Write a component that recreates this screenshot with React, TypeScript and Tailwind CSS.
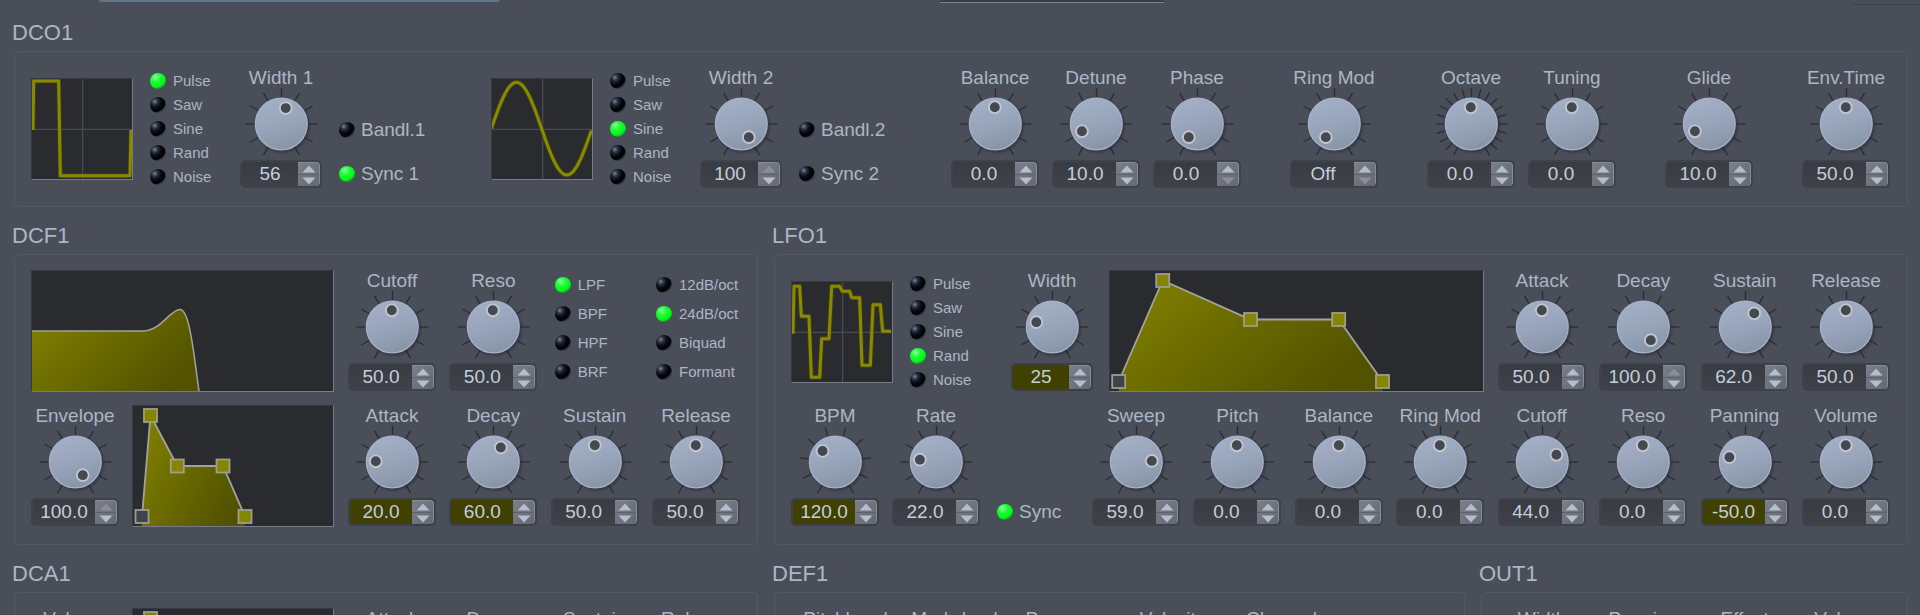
import React, { useId, useState } from "react";

const LED =
  "m-0 size-4 shrink-0 cursor-pointer appearance-none rounded-full bg-[radial-gradient(circle_at_30%_28%,#7d8593_0%,#2b3443_18%,#080d17_38%,#000000_58%,#0a0b0e_64%,#3c3f48_72%)] checked:bg-[radial-gradient(circle_at_36%_28%,#8effa0_0%,#1cff36_30%,#00fa14_60%,#00e012_66%,#2f7a40_76%)]";

function Led({
  type,
  name,
  text,
  checked,
  small,
}: {
  type: "radio" | "checkbox";
  name?: string;
  text: string;
  checked?: boolean;
  small?: boolean;
}) {
  const id = useId();
  return (
    <div className={small ? "flex items-center gap-[7px]" : "flex items-center gap-1.5"}>
      <input id={id} type={type} name={name} defaultChecked={checked} className={LED} />
      <label
        htmlFor={id}
        className={small ? "text-[15px] leading-6 whitespace-nowrap" : "text-[19px] leading-7 whitespace-nowrap"}
      >
        {text}
      </label>
    </div>
  );
}

function LedList({ name, items, selected, roomy }: { name: string; items: string[]; selected: number; roomy?: boolean }) {
  return (
    <div role="radiogroup" aria-label={name} className={roomy ? "w-[88px] pl-1" : "w-[74px] shrink-0 pt-0.5"}>
      {items.map((t, i) => (
        <div key={t} className={roomy ? "flex h-[29px] items-center" : "flex h-6 items-center"}>
          <Led small type="radio" name={name} text={t} checked={i === selected} />
        </div>
      ))}
    </div>
  );
}

type KnobProps = {
  label: string;
  value: number;
  min?: number;
  max?: number;
  digits?: number;
  ticks?: number;
  active?: boolean;
  narrow?: boolean;
  offAtMin?: boolean;
};

function Knob({ label, value, min = 0, max = 100, digits = 1, ticks = 11, active, narrow, offAtMin }: KnobProps) {
  const id = useId();
  const [v, setV] = useState(value);
  const clamp = (n: number) => Math.min(max, Math.max(min, n));
  const a = ((-150 + (300 * (v - min)) / (max - min)) * Math.PI) / 180;
  const shown = offAtMin && v === min ? "Off" : v.toFixed(digits);
  return (
    <div className={narrow ? "w-[82px] shrink-0 pt-px" : "w-[88px] shrink-0 pt-px"}>
      <Caption htmlFor={id}>{label}</Caption>
      <div className="relative flex h-[72px] justify-center">
        <svg width="82" height="72" viewBox="0 0 82 72" aria-hidden="true">
          <defs>
            <linearGradient id={id + "f"} x1="0.35" y1="0" x2="0.65" y2="1">
              <stop offset="0" stopColor="#a2afc5" />
              <stop offset="0.5" stopColor="#98a4b9" />
              <stop offset="1" stopColor="#8793a5" />
            </linearGradient>
            <radialGradient id={id + "s"}>
              <stop offset="0.82" stopColor="#23252b" stopOpacity="0.65" />
              <stop offset="1" stopColor="#23252b" stopOpacity="0" />
            </radialGradient>
          </defs>
          {Array.from({ length: ticks }, (_, i) => {
            const t = ((-150 + (300 * i) / (ticks - 1)) * Math.PI) / 180;
            return (
              <line
                key={i}
                x1={41.5 + 27 * Math.sin(t)}
                y1={36 - 27 * Math.cos(t)}
                x2={41.5 + 36 * Math.sin(t)}
                y2={36 - 36 * Math.cos(t)}
                stroke="#2b2d33"
                strokeWidth="1.3"
              />
            );
          })}
          <circle cx="42.8" cy="37.6" r="29" fill={`url(#${id}s)`} />
          <circle cx="41.3" cy="36" r="25.9" fill={`url(#${id}f)`} stroke="#a5b2cd" strokeWidth="1.3" />
          <circle
            cx={40.8 + 16 * Math.sin(a)}
            cy={35.3 - 16 * Math.cos(a)}
            r="5.9"
            fill="#444850"
            stroke="#c3c6cc"
            strokeWidth="1.9"
          />
        </svg>
        <input
          type="range"
          aria-label={label + " knob"}
          min={min}
          max={max}
          value={v}
          onChange={(e) => setV(Number(e.target.value))}
          className="absolute inset-2 cursor-pointer opacity-0"
        />
      </div>
      <div
        className={
          active
            ? "flex h-7 rounded-[5px] border-2 border-[#3c3f46] bg-[#404000]"
            : "flex h-7 rounded-[5px] border-2 border-[#3f4249] bg-linear-to-b from-[#383b42] to-[#3f4249]"
        }
      >
        <input
          id={id}
          type="text"
          value={shown}
          onChange={(e) => {
            const n = Number(e.target.value);
            if (!Number.isNaN(n)) setV(clamp(n));
          }}
          className="w-0 flex-1 bg-transparent text-center text-[19px] leading-6 text-[#c3cedb] outline-none"
        />
        <div className="flex w-[22px] flex-col rounded-r-[4px] border-t border-r border-[#868c98] bg-linear-to-br from-[#7a7f8b] to-[#636871]">
          <Arrow label={label + " up"} up dim={v >= max} onClick={() => setV(clamp(v + 1))} />
          <Arrow label={label + " down"} dim={v <= min} onClick={() => setV(clamp(v - 1))} />
        </div>
      </div>
    </div>
  );
}

function Arrow({ label, up, dim, onClick }: { label: string; up?: boolean; dim: boolean; onClick: () => void }) {
  return (
    <button
      type="button"
      aria-label={label}
      disabled={dim}
      onClick={onClick}
      className={up ? "flex flex-1 items-center justify-center border-b border-[#5d626c]" : "flex flex-1 items-center justify-center"}
    >
      <svg width="14" height="8" viewBox="0 0 14 8" aria-hidden="true">
        <path d={up ? "M7 0.5 L13.5 7.5 H0.5 Z" : "M0.5 0.5 H13.5 L7 7.5 Z"} fill={dim ? "#8a909b" : "#b4bfce"} />
      </svg>
    </button>
  );
}

function Caption({ children, htmlFor }: { children: React.ReactNode; htmlFor?: string }) {
  const cls = "flex h-5 justify-center text-[19px] leading-5 whitespace-nowrap";
  return htmlFor ? (
    <label htmlFor={htmlFor} className={cls}>
      {children}
    </label>
  ) : (
    <div className={cls}>{children}</div>
  );
}

const SCREEN = "border border-t-[#363940] border-r-[#747b89] border-b-[#747b89] border-l-[#363940] bg-[#2a2b2f]";

function WaveScope({ view, points }: { view: [number, number]; points: string }) {
  const [x, y] = view;
  return (
    <div className={"mt-[11px] size-[102px] shrink-0 " + SCREEN}>
      <svg className="block size-full" viewBox={`${x} ${y} 300 300`} aria-hidden="true">
        <path d={`M${x + 152} ${y}v300M${x} ${y + 151}h300`} stroke="#454b54" strokeWidth="4" />
        <polyline points={points} fill="none" stroke="#4b4b08" strokeWidth="14" strokeLinejoin="round" opacity="0.7" />
        <polyline points={points} fill="none" stroke="#8a8a00" strokeWidth="9" strokeLinejoin="round" />
      </svg>
    </div>
  );
}

function EnvelopeScope({ width, nodes }: { width: number; nodes: [number, number][] }) {
  const id = useId();
  const first = nodes[0];
  const last = nodes[nodes.length - 1];
  const line = nodes.map((n) => n.join(",")).join(" ");
  return (
    <div className={"h-[122px] min-w-0 flex-1 " + SCREEN}>
      <svg className="block size-full" viewBox={`1 1 ${width - 2} 120`} preserveAspectRatio="none" aria-hidden="true">
        <Fade id={id} />
        <polygon points={`${first[0]},121 ${line} ${last[0]},121`} fill={`url(#${id})`} />
        <polyline points={line} fill="none" stroke="#a3a39b" strokeWidth="1.8" />
        {nodes.map(([x, y], i) => (
          <rect
            key={i}
            x={x - 6.5}
            y={y - 6.5}
            width="13"
            height="13"
            fill={i === 0 ? "#3f434c" : "#858500"}
            stroke="#9d9d90"
            strokeWidth="1.8"
          />
        ))}
      </svg>
    </div>
  );
}

function Fade({ id }: { id: string }) {
  return (
    <defs>
      <linearGradient id={id} x1="0" y1="0.1" x2="1" y2="0.6">
        <stop offset="0.05" stopColor="#7e7e00" />
        <stop offset="1" stopColor="#525200" />
      </linearGradient>
    </defs>
  );
}

function FilterScope() {
  const id = useId();
  const d = "M1 61 H112 C130 61 139 39.5 149 39.5 C159 39.5 163 87 168 121";
  return (
    <div className={"h-[122px] min-w-0 flex-1 " + SCREEN}>
      <svg className="block size-full" viewBox="1 1 301 120" preserveAspectRatio="none" aria-hidden="true">
        <Fade id={id} />
        <path d={d + " H1 Z"} fill={`url(#${id})`} />
        <path d={d} fill="none" stroke="#a3a39b" strokeWidth="1.5" />
      </svg>
    </div>
  );
}

function Group({ title, children }: { title: string; children: React.ReactNode }) {
  return (
    <section aria-label={title} className="min-w-0">
      <h2 className="mb-1 pl-px text-[22px] leading-7">{title}</h2>
      <div className="ml-[3px] flex flex-col gap-[13px] rounded-[5px] border border-[#545862] px-4 pt-[15px] pr-[17px] pb-[17px]">
        {children}
      </div>
    </section>
  );
}

const WAVES = ["Pulse", "Saw", "Sine", "Rand", "Noise"];

const PULSE = "97,390 99,243 174,243 179,527 388,527 391,390";
const RANDOM =
  "100,355 103,213 120,213 125,303 148,303 155,486 180,486 186,370 208,370 216,213 240,213 248,228 270,228 276,247 300,247 307,450 332,450 340,268 362,268 369,348 394,348";
const SINE = Array.from({ length: 61 }, (_, i) => {
  const x = 97 + i * 5;
  return `${x},${(386 - 139 * Math.sin(((x - 97) / 302) * 2 * Math.PI)).toFixed(1)}`;
}).join(" ");

const FILTER_ENV: [number, number][] = [
  [10, 111.5],
  [18.5, 10.5],
  [45.3, 61],
  [91, 61],
  [113, 111.5],
];
const LFO_ENV: [number, number][] = [
  [9.7, 111.5],
  [53.7, 10.5],
  [141.5, 49.5],
  [229.7, 49.5],
  [273.5, 111.5],
];

function Oscillator({ n, width, wave, scope, sync }: { n: number; width: number; wave: number; scope: React.ReactNode; sync?: boolean }) {
  return (
    <div className="flex">
      {scope}
      <div className="ml-[17px] flex">
        <LedList name={"Wave " + n} items={WAVES} selected={wave} />
      </div>
      <div className="ml-4 flex gap-[17px]">
        <Knob narrow label={"Width " + n} value={width} digits={0} />
        <div className="flex w-[86px] flex-col justify-end gap-4 pb-px">
          <Led type="checkbox" text={"Bandl." + n} />
          <Led type="checkbox" text={"Sync " + n} checked={sync} />
        </div>
      </div>
    </div>
  );
}

export default function App() {
  return (
    <main className="h-screen overflow-hidden bg-[#4a4e58] font-['Liberation_Sans',Arial,sans-serif] text-[#abb6c6]">
      <div aria-hidden="true" className="grid h-[19px] grid-cols-[99fr_401fr_440fr_224fr_689fr_67fr] items-start">
        <i />
        <i className="h-0.5 rounded-b-sm bg-[#647587]" />
        <i />
        <i className="h-[3px] border-b border-[#7b8290] bg-[#3a3c43]" />
        <i />
        <i className="h-[5px] border-b border-[#3e4149]" />
      </div>
      <div className="flex flex-col gap-[15px] pr-3 pl-[11px]">
        <Group title="DCO1">
          <div className="flex min-h-[122px] justify-between">
            <Oscillator n={1} width={56} wave={0} sync scope={<WaveScope view={[94, 237]} points={PULSE} />} />
            <Oscillator n={2} width={100} wave={2} scope={<WaveScope view={[99, 237]} points={SINE} />} />
            <div className="flex gap-[49px]">
              <div className="flex gap-[13px]">
                <Knob label="Balance" value={0} min={-100} />
                <Knob label="Detune" value={10} />
                <Knob label="Phase" value={0} />
              </div>
              <Knob label="Ring Mod" value={0} offAtMin />
              <div className="flex gap-[13px]">
                <Knob label="Octave" value={0} min={-10} max={10} ticks={21} />
                <Knob label="Tuning" value={0} min={-100} />
              </div>
              <Knob label="Glide" value={10} />
              <Knob label="Env.Time" value={50} />
            </div>
          </div>
        </Group>

        <div className="grid grid-cols-[minmax(0,747fr)_minmax(0,1137fr)] gap-[13px]">
          <Group title="DCF1">
            <div className="flex min-h-[122px] gap-3.5">
              <FilterScope />
              <div className="flex w-[392px] shrink-0 justify-between">
                <Knob label="Cutoff" value={50} />
                <Knob label="Reso" value={50} />
                <LedList roomy name="Filter" items={["LPF", "BPF", "HPF", "BRF"]} selected={0} />
                <LedList roomy name="Slope" items={["12dB/oct", "24dB/oct", "Biquad", "Formant"]} selected={1} />
              </div>
            </div>
            <div className="flex min-h-[122px] gap-3.5">
              <div className="flex min-w-0 flex-1 gap-[13px]">
                <Knob label="Envelope" value={100} />
                <EnvelopeScope width={202} nodes={FILTER_ENV} />
              </div>
              <div className="flex w-[392px] shrink-0 justify-between">
                <Knob label="Attack" value={20} active />
                <Knob label="Decay" value={60} active />
                <Knob label="Sustain" value={50} />
                <Knob label="Release" value={50} />
              </div>
            </div>
          </Group>

          <Group title="LFO1">
            <div className="flex min-h-[122px]">
              <WaveScope view={[97, 200]} points={RANDOM} />
              <div className="ml-[17px] flex">
                <LedList name="LFO wave" items={WAVES} selected={3} />
              </div>
              <div className="ml-[27px] flex min-w-0 flex-1 gap-4">
                <Knob narrow label="Width" value={25} digits={0} active />
                <EnvelopeScope width={375} nodes={LFO_ENV} />
              </div>
              <div className="ml-3.5 flex w-[392px] shrink-0 justify-between">
                <Knob label="Attack" value={50} />
                <Knob label="Decay" value={100} />
                <Knob label="Sustain" value={62} />
                <Knob label="Release" value={50} />
              </div>
            </div>
            <div className="flex min-h-[122px] justify-between">
              <div className="flex gap-[13px]">
                <Knob label="BPM" value={120} max={360} ticks={10} active />
                <Knob label="Rate" value={22} />
                <div className="flex flex-col justify-end pb-px pl-1">
                  <Led type="checkbox" text="Sync" checked />
                </div>
              </div>
              <div className="flex w-[798px] shrink-0 justify-between">
                <Knob label="Sweep" value={59} min={-100} />
                <Knob label="Pitch" value={0} min={-100} />
                <Knob label="Balance" value={0} min={-100} />
                <Knob label="Ring Mod" value={0} min={-100} />
                <Knob label="Cutoff" value={44} min={-100} />
                <Knob label="Reso" value={0} min={-100} />
                <Knob label="Panning" value={-50} min={-100} active />
                <Knob label="Volume" value={0} min={-100} />
              </div>
            </div>
          </Group>
        </div>

        <div className="grid grid-cols-[minmax(0,747fr)_minmax(0,694fr)_minmax(0,430fr)] gap-[13px]">
          <Group title="DCA1">
            <div className="flex gap-3.5">
              <div className="flex min-w-0 flex-1 gap-[13px]">
                <div className="w-[88px] pt-px">
                  <Caption>Volume</Caption>
                </div>
                <EnvelopeScope width={202} nodes={FILTER_ENV} />
              </div>
              <div className="grid w-[392px] shrink-0 grid-cols-4 gap-[13px] pt-px">
                {["Attack", "Decay", "Sustain", "Release"].map((t) => (
                  <Caption key={t}>{t}</Caption>
                ))}
              </div>
            </div>
          </Group>
          <Group title="DEF1">
            <div className="flex min-h-[122px] pt-px">
              {["Pitchbend", "Modwheel", "Pressure", "Velocity", "Channel"].map((t) => (
                <div key={t} className="w-[109px] shrink-0">
                  <Caption>{t}</Caption>
                </div>
              ))}
            </div>
          </Group>
          <Group title="OUT1">
            <div className="flex justify-end pt-px">
              <div className="grid w-[392px] grid-cols-4 gap-[13px]">
                {["Width", "Panning", "Effect", "Volume"].map((t) => (
                  <Caption key={t}>{t}</Caption>
                ))}
              </div>
            </div>
          </Group>
        </div>
      </div>
    </main>
  );
}
